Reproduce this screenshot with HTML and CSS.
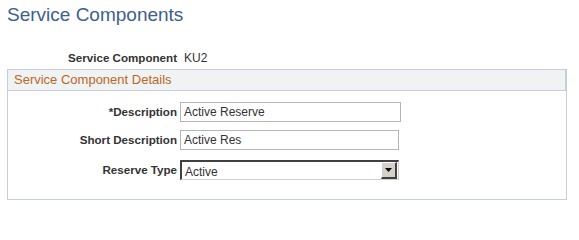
FILE: index.html
```html
<!DOCTYPE html>
<html>
<head>
<meta charset="utf-8">
<link rel="stylesheet" href="styles.css">
</head>
<body>
<h1 class="title">Service Components</h1>
<div class="keyrow">
  <span class="label">Service Component</span>
  <span class="keyval">KU2</span>
</div>
<div class="group">
  <div class="group-head">Service Component Details</div>
  <div class="form">
    <label class="label">*Description</label>
    <div class="input w221">Active Reserve</div>
    <label class="label">Short Description</label>
    <div class="input w219">Active Res</div>
    <label class="label sel-label">Reserve Type</label>
    <div class="select">
      <span class="select-text">Active</span>
      <span class="select-btn"><svg width="7" height="4" viewBox="0 0 7 4"><path d="M0 0H7L3.5 4Z" fill="#000"/></svg></span>
    </div>
  </div>
</div>
</body>
</html>
```
FILE: styles.css
```css
body {
  margin: 0;
  font-family: "Liberation Sans", Arial, sans-serif;
  background: #fff;
  color: #333;
}
.title {
  margin: 0;
  padding: 5px 0 0 7px;
  font-size: 19px;
  font-weight: normal;
  color: #3d5e8f;
  line-height: 20px;
  height: 20px;
}
.keyrow {
  display: grid;
  grid-template-columns: 169px auto;
  column-gap: 7px;
  align-items: baseline;
  justify-items: start;
  margin-top: 26px;
  padding-left: 8px;
  height: 18px;
  line-height: 14px;
  font-size: 12px;
}
.keyrow .label {
  justify-self: end;
}
.label {
  font-weight: bold;
  font-size: 11.6px;
  color: #333;
  line-height: 14px;
}
.keyval {
  color: #333;
  font-size: 12px;
}
.group {
  margin: 0 0 0 7px;
  width: 560px;
  height: 131px;
  border: 1px solid #c9ced6;
  box-sizing: border-box;
}
.group-head {
  height: 21px;
  box-sizing: border-box;
  background: #eff3f4;
  border-bottom: 1px solid #c9ced6;
  border-right: 2px solid #c9ced6;
  margin-right: -1px;
  color: #c0661e;
  font-size: 13px;
  line-height: 15px;
  padding: 2px 0 0 6px;
}
.form {
  display: grid;
  grid-template-columns: 169px auto;
  column-gap: 3px;
  row-gap: 8px;
  padding-top: 11px;
  align-items: center;
  justify-items: start;
}
.form .label {
  justify-self: end;
}
.sel-label {
  align-self: start;
  margin-top: 5px;
}
.input {
  height: 20px;
  box-sizing: border-box;
  border: 1px solid #b5b5b5;
  font-size: 12px;
  line-height: 14px;
  color: #333;
  padding: 2px 0 0 3px;
  background: #fff;
}
.w221 { width: 221px; }
.w219 { width: 219px; }
.select {
  width: 219px;
  height: 20px;
  box-sizing: border-box;
  border-top: 2px solid #404040;
  border-left: 2px solid #404040;
  border-right: 1px solid #d4d0c8;
  border-bottom: 1px solid #d4d0c8;
  display: flex;
  align-items: stretch;
  background: #fff;
  margin-top: 2px;
}
.select-text {
  flex: 1;
  font-size: 12px;
  line-height: 14px;
  color: #333;
  padding: 3px 0 0 3px;
}
.select-btn {
  width: 16px;
  box-sizing: border-box;
  background: #d4d0c8;
  border-top: 1px solid #fff;
  border-left: 1px solid #fff;
  border-right: 2px solid #404040;
  border-bottom: 2px solid #404040;
  margin-right: 1px;
  display: flex;
  align-items: center;
  justify-content: center;
}
```
